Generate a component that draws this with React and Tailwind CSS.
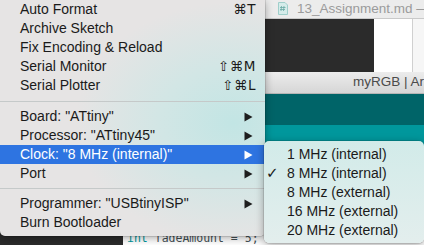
import React from "react";

const Arrow = ({ white }) => (
  <svg width="9" height="10" viewBox="0 0 9 10" className="block">
    <polygon points="0.5,0.5 8.5,5 0.5,9.5" fill={white ? "#ffffff" : "#1e1e1e"} />
  </svg>
);

const Item = ({ label, shortcut, arrow, active }) => (
  <div
    className={
      "h-[19px] flex items-center pl-[20px] pr-[10px] " +
      (active ? "bg-[#2e74e1] text-white" : "text-[#1a1a1a]")
    }
  >
    <span className="flex-1 whitespace-nowrap">{label}</span>
    {shortcut && (
      <span className="whitespace-nowrap font-['DejaVu_Sans',sans-serif] text-[13.5px] tracking-[0.5px] mr-[-1px]">
        {shortcut}
      </span>
    )}
    {arrow && (
      <span className="mr-[2px]">
        <Arrow white={active} />
      </span>
    )}
  </div>
);

const Sep = ({ h }) => (
  <div className={"flex items-center " + h}>
    <div className="h-[1px] w-full bg-[#c5c9c9]" />
  </div>
);

const SubItem = ({ label, checked }) => (
  <div className="h-[19px] flex items-center text-[#1a1a1a]">
    <span className="w-[23px] pl-[2px] text-[15px] font-['DejaVu_Sans',sans-serif] leading-none">
      {checked ? "✓" : ""}
    </span>
    <span className="whitespace-nowrap">{label}</span>
  </div>
);

export default function App() {
  return (
    <div className="w-[424px] h-[245px] relative overflow-hidden bg-[#2b2b2b] font-['Liberation_Sans',Arial,sans-serif] text-[14px]">
      {/* background window */}
      <div className="flex flex-col h-full">
        <div className="h-[19px] bg-[#ececec] border-b border-[#c9c9c9] flex items-center pl-[278px] gap-[9px] whitespace-nowrap overflow-hidden">
          <svg width="10" height="13" viewBox="0 0 10 13" className="shrink-0">
            <path d="M0.5 0.5 H7 L9.5 3 V12.5 H0.5 Z" fill="#d5ecea" stroke="#9fcfcb" />
            <path d="M3.5 4 L3 9 M6 4 L5.5 9 M2 5.5 H7.5 M2 7.5 H7" stroke="#6aa9a4" strokeWidth="0.8" />
          </svg>
          <span className="text-[13.5px] text-[#9b9b9b]">13_Assignment.md —</span>
        </div>
        <div className="h-[54px] flex">
          <div className="flex-1 bg-[#2b2b2b]" />
          <div className="w-[38px] bg-white" />
          <div className="w-[1px] bg-[#d0d0d0]" />
          <div className="w-[11px] bg-[#f6f6f6]" />
        </div>
        <div className="h-[22px] bg-[linear-gradient(#ececec,#d6d6d6)] border-b border-[#b5b5b5] flex items-center pl-[353px] whitespace-nowrap overflow-hidden text-[13.5px] text-[#4b4b4b]">
          myRGB | Arduino
        </div>
        <div className="h-[32px] bg-[#006468]" />
        <div className="h-[106px] bg-[#00979c]" />
        <div className="flex-1 flex">
          <div className="w-[123px] bg-[#2b2b2b]" />
          <div className="flex-1 bg-white pl-[4px] pt-[1px] whitespace-nowrap font-['DejaVu_Sans_Mono',monospace] text-[11.5px] leading-[14px] text-[#434f54]">
            <span className="text-[#00979c]">int</span> fadeAmount = 5;
          </div>
        </div>
      </div>

      {/* main menu */}
      <div className="absolute left-0 top-0 w-[265px] h-[236px] rounded-b-[5px] shadow-[0_2px_8px_rgba(0,0,0,0.35),0_0_0_0.5px_rgba(0,0,0,0.2)] bg-[radial-gradient(ellipse_70%_60%_at_88%_52%,#c2e5e4_0%,#d2e6e5_40%,#e6e4e4_85%)] flex flex-col">
        <Item label="Auto Format" shortcut="⌘T" />
        <Item label="Archive Sketch" />
        <Item label="Fix Encoding & Reload" />
        <Item label="Serial Monitor" shortcut="⇧⌘M" />
        <Item label="Serial Plotter" shortcut="⇧⌘L" />
        <Sep h="h-[12px]" />
        <Item label='Board: "ATtiny"' arrow />
        <Item label='Processor: "ATtiny45"' arrow />
        <Item label='Clock: "8 MHz (internal)"' arrow active />
        <Item label="Port" arrow />
        <Sep h="h-[11px]" />
        <Item label='Programmer: "USBtinyISP"' arrow />
        <Item label="Burn Bootloader" />
      </div>

      {/* submenu */}
      <div className="absolute left-[264px] top-[141px] w-[160px] h-[102px] rounded-[5px] shadow-[0_2px_8px_rgba(0,0,0,0.35),0_0_0_0.5px_rgba(0,0,0,0.2)] bg-[linear-gradient(#d2ebe9,#e3eeed)] pt-[4px]">
        <SubItem label="1 MHz (internal)" />
        <SubItem label="8 MHz (internal)" checked />
        <SubItem label="8 MHz (external)" />
        <SubItem label="16 MHz (external)" />
        <SubItem label="20 MHz (external)" />
      </div>
    </div>
  );
}
